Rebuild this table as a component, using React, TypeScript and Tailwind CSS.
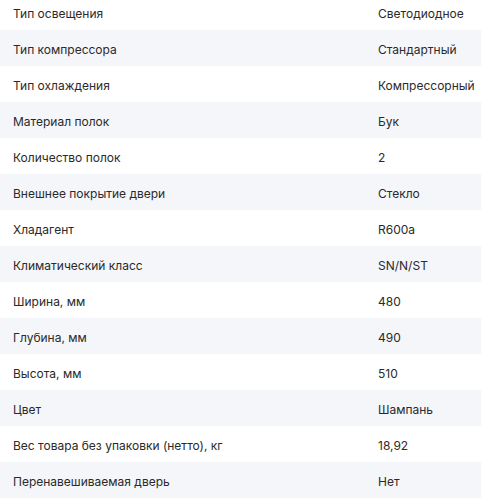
import React from "react";

const rows: [string, string][] = [
  ["Тип освещения", "Светодиодное"],
  ["Тип компрессора", "Стандартный"],
  ["Тип охлаждения", "Компрессорный"],
  ["Материал полок", "Бук"],
  ["Количество полок", "2"],
  ["Внешнее покрытие двери", "Стекло"],
  ["Хладагент", "R600a"],
  ["Климатический класс", "SN/N/ST"],
  ["Ширина, мм", "480"],
  ["Глубина, мм", "490"],
  ["Высота, мм", "510"],
  ["Цвет", "Шампань"],
  ["Вес товара без упаковки (нетто), кг", "18,92"],
  ["Перенавешиваемая дверь", "Нет"],
];

export default function App() {
  return (
    <div className="w-[481px] h-[500px] overflow-hidden bg-white" style={{ fontFamily: "Inter, 'Noto Sans', sans-serif" }}>
      <div className="-mt-[6px] flex flex-col">
        {rows.map(([k, v], i) => (
          <div
            key={k}
            className={`flex h-[36px] items-center pt-[3px] text-[12px] text-[#2a2a2a] ${i % 2 === 1 ? "bg-[#f5f6fa]" : "bg-white"}`}
          >
            <div className="pl-[13px] w-[378px] shrink-0">{k}</div>
            <div className="flex-1">{v}</div>
          </div>
        ))}
      </div>
    </div>
  );
}
